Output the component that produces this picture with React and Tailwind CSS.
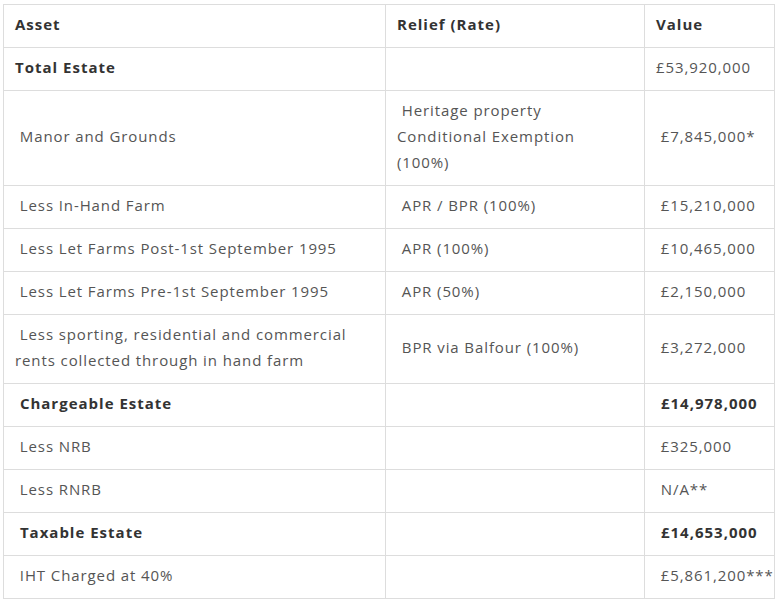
import React from 'react';

const rows = [
  { asset: 'Total Estate', relief: '', value: '£53,920,000', bold: 'asset' },
  { asset: '\u00a0Manor and Grounds', relief: ['\u00a0Heritage property', 'Conditional Exemption', '(100%)'], value: '\u00a0£7,845,000*' },
  { asset: '\u00a0Less In-Hand Farm', relief: '\u00a0APR / BPR (100%)', value: '\u00a0£15,210,000' },
  { asset: '\u00a0Less Let Farms Post-1st September 1995', relief: '\u00a0APR (100%)', value: '\u00a0£10,465,000' },
  { asset: '\u00a0Less Let Farms Pre-1st September 1995', relief: '\u00a0APR (50%)', value: '\u00a0£2,150,000' },
  { asset: ['\u00a0Less sporting, residential and commercial', 'rents collected through in hand farm'], relief: '\u00a0BPR via Balfour (100%)', value: '\u00a0£3,272,000' },
  { asset: '\u00a0Chargeable Estate', relief: '', value: '\u00a0£14,978,000', bold: 'both' },
  { asset: '\u00a0Less NRB', relief: '', value: '\u00a0£325,000' },
  { asset: '\u00a0Less RNRB', relief: '', value: '\u00a0N/A**' },
  { asset: '\u00a0Taxable Estate', relief: '', value: '\u00a0£14,653,000', bold: 'both' },
  { asset: '\u00a0IHT Charged at 40%', relief: '', value: '\u00a0£5,861,200***' },
];

const Lines = ({ text }) =>
  Array.isArray(text) ? text.map((t, i) => <span key={i} className="block whitespace-nowrap">{t}</span>) : text;

const cell = 'border border-[#dddddd] px-[11px] pt-[6px] pb-[10px] align-middle leading-[26px] whitespace-nowrap';
const strong = 'font-bold text-[#333333] tracking-[1px]';

export default function App() {
  return (
    <div className="bg-white w-[779px] h-[601px] pt-[4px] pl-[3px]" style={{ fontFamily: '"Open Sans", "Liberation Sans", sans-serif' }}>
      <table className="border-collapse w-[771px] text-[15px] tracking-[0.9px] text-[#555555] table-fixed">
        <colgroup>
          <col className="w-[382px]" />
          <col className="w-[259px]" />
          <col className="w-[130px]" />
        </colgroup>
        <thead>
          <tr className={`text-left ${strong}`}>
            <th className={cell}>Asset</th>
            <th className={cell}>Relief (Rate)</th>
            <th className={cell}>Value</th>
          </tr>
        </thead>
        <tbody>
          {rows.map((r, i) => (
            <tr key={i}>
              <td className={`${cell} ${r.bold ? strong : ''}`}><Lines text={r.asset} /></td>
              <td className={cell}><Lines text={r.relief} /></td>
              <td className={`${cell} ${r.bold === 'both' ? strong : ''}`}><Lines text={r.value} /></td>
            </tr>
          ))}
        </tbody>
      </table>
    </div>
  );
}
